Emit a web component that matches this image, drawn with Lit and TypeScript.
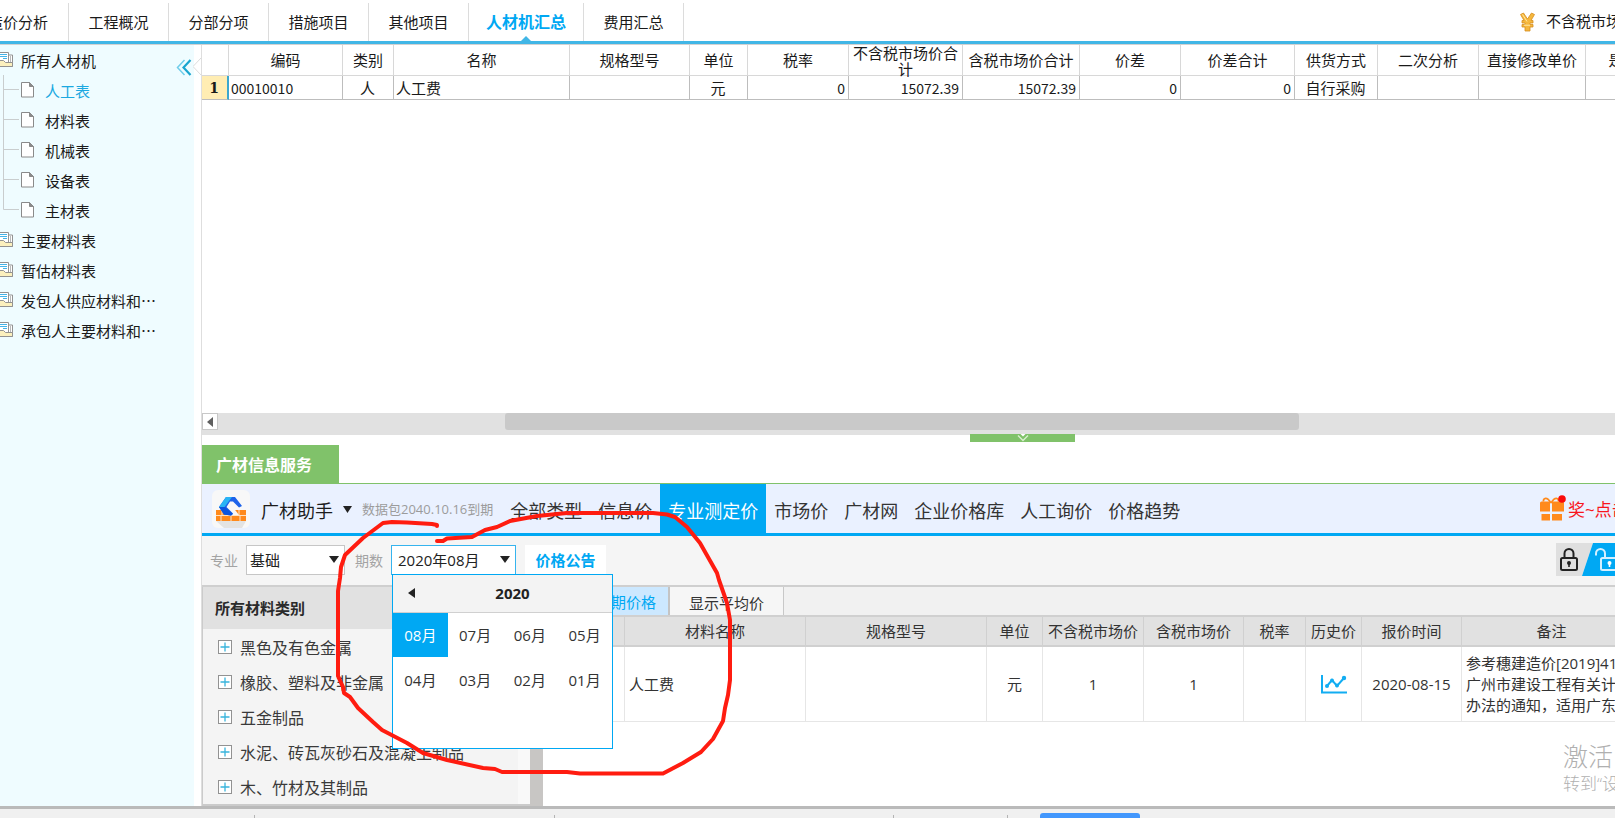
import { LitElement, html, css, svg } from "lit";
import { customElement, state } from "lit/decorators.js";
import { classMap } from "lit/directives/class-map.js";

const baseStyles = css`
  * { box-sizing: border-box; }
  button {
    margin: 0; padding: 0; border: 0; background: none; color: inherit;
    font: inherit; white-space: nowrap; cursor: pointer; text-align: left;
  }
  svg { display: block; flex: none; }
  table { border-collapse: separate; border-spacing: 0; table-layout: fixed; }
  th, td { font-weight: 400; padding: 0; overflow: hidden; }
`;

const folderIcon = svg`
  <path d="M-3 .5H8.500V3H12.500V14.500H-3z" fill="#fff" stroke="#929292"/>
  <path d="M8.500 1V10" stroke="#929292"/>
  <path d="M10.500 4V10" stroke="#b9b9b9"/>
  <path d="M0 2.500h7M0 4.500h7M3 6.500h4" stroke="#45b4e8"/>
  <path d="M-3 8.500H3.500L5.500 10.500H12.500V14.500H-3z" fill="#fbf0be" stroke="#929292"/>`;

@customElement("top-tabs")
class TopTabs extends LitElement {
  @state() active = "人材机汇总";
  tabs = ["造价分析", "工程概况", "分部分项", "措施项目", "其他项目", "人材机汇总", "费用汇总"];
  static styles = [baseStyles, css`
    :host { display: flex; flex: none; height: 45px; border-bottom: 1px solid #d2d2d2; background: #fff; }
    .line { display: flex; flex: 1; min-width: 0; height: 44px; border-bottom: 3px solid #41b6e6; justify-content: space-between; }
    .tabs { display: flex; margin-left: -32px; padding-top: 3px; }
    .tab {
      position: relative; width: 101px; text-align: center; padding-bottom: 2px;
      border-right: 1px solid #dcdcdc; font-size: 15px; color: #1a1a1a;
    }
    .tab + .tab { width: 100px; }
    .tab + .tab.active { width: 115px; font-size: 16px; font-weight: 700; color: #00a8f3; padding-bottom: 2px; }
    .mark {
      position: absolute; left: 52px; bottom: 0; width: 10px; height: 5px;
      background: #41b6e6; clip-path: polygon(50% 0, 100% 100%, 0 100%);
    }
    .total { display: flex; flex: 0 0 95px; gap: 11px; padding-top: 10px; line-height: 22px; white-space: nowrap; overflow: hidden; }
    .total svg { margin-top: 2px; }
  `];
  render() {
    return html`<div class="line">
      <nav class="tabs">
        ${this.tabs.map(t => html`<button class=${classMap({ tab: true, active: t === this.active })}
          @click=${() => (this.active = t)}>${t}${t === this.active ? html`<span class="mark"></span>` : ""}</button>`)}
      </nav>
      <div class="total">
        <svg width="15" height="20" viewBox="0 0 15 20">
          <path d="M.5 2.500l3-1.500 4 6 4-6 3 1.500-3.500 6h2v2.500h-3v1.500h3v2.500h-3v4h-5v-4h-3v-2.500h3v-1.500h-3v-2.500h2z"
            fill="#f5b73c" stroke="#d58e1f" stroke-width=".8"/>
          <path d="M2.500 2.500l4.500 7M4 13.200h6" stroke="#ffe9a8" stroke-width="1"/>
        </svg>
        <span>不含税市场价合计</span>
      </div>
    </div>`;
  }
}

@customElement("side-tree")
class SideTree extends LitElement {
  @state() active = "人工表";
  leaves = ["人工表", "材料表", "机械表", "设备表", "主材表"];
  others = ["主要材料表", "暂估材料表", "发包人供应材料和…", "承包人主要材料和…"];
  static styles = [baseStyles, css`
    :host { display: block; position: relative; flex: 0 0 194px; background: #effcff; }
    .row { display: flex; align-items: center; height: 30px; width: 100%; font-size: 15px; color: #1a1a1a; }
    .folder { gap: 8px; }
    .folder svg { align-self: flex-start; margin-top: 7px; }
    .leaf { gap: 11px; }
    .active { color: #1ba9e1; }
    .fold { position: absolute; top: 12px; right: 2px; }
    .notch { position: absolute; top: 12px; right: -7px; z-index: 1; }
  `];
  folder(t: string) {
    return html`<button class="row folder">
      <svg width="13" height="15" viewBox="0 0 13 15" fill="none">${folderIcon}</svg>${t}</button>`;
  }
  render() {
    const last = this.leaves.length - 1;
    return html`
      ${this.folder("所有人材机")}
      ${this.leaves.map((t, i) => html`
        <button class=${classMap({ row: true, leaf: true, active: t === this.active })} @click=${() => (this.active = t)}>
          <svg width="34" height="30" viewBox="0 0 34 30" fill="none">
            <path d=${i === last ? "M3.500 0V14.500H19" : "M3.500 0V30M3.500 14.500H19"} stroke="#c9cdce"/>
            <path d="M21.500 7.500h8l4 4v10.500h-12z" fill="#fff" stroke="#8a8a8a"/>
            <path d="M29.500 7.500v4h4z" fill="#8a8a8a" stroke="#8a8a8a"/>
          </svg>${t}</button>`)}
      ${this.others.map(t => this.folder(t))}
      <button class="fold" aria-label="收起">
        <svg width="16" height="20" viewBox="0 0 16 20" fill="none">
          <path d="M8.500 3L1.500 10.500l7 7.500" stroke="#6fcdea" stroke-width="1.500"/>
          <path d="M14.500 3L7.500 10.500l7 7.500" stroke="#1aa5cf" stroke-width="2.200"/>
        </svg>
      </button>
      <svg class="notch" width="8" height="20" viewBox="0 0 8 20">
        <path d="M8 1L0 9.500 8 18" fill="#fff" stroke="#dcdcdc"/>
      </svg>`;
  }
}

interface Col { title: string; width: number; value: string; align?: string }

@customElement("summary-grid")
class SummaryGrid extends LitElement {
  cols: Col[] = [
    { title: "编码", width: 114, value: "00010010", align: "left" },
    { title: "类别", width: 51, value: "人" },
    { title: "名称", width: 176, value: "人工费", align: "left" },
    { title: "规格型号", width: 120, value: "" },
    { title: "单位", width: 58, value: "元" },
    { title: "税率", width: 101, value: "0", align: "right" },
    { title: "不含税市场价合计", width: 114, value: "15072.39", align: "right" },
    { title: "含税市场价合计", width: 117, value: "15072.39", align: "right" },
    { title: "价差", width: 101, value: "0", align: "right" },
    { title: "价差合计", width: 114, value: "0", align: "right" },
    { title: "供货方式", width: 83, value: "自行采购" },
    { title: "二次分析", width: 101, value: "" },
    { title: "直接修改单价", width: 107, value: "" },
    { title: "是否暂估", width: 106, value: "" },
  ];
  static styles = [baseStyles, css`
    :host { display: flex; flex-direction: column; flex: 1; min-height: 0; min-width: 0; position: relative; }
    .view { flex: 1; overflow: hidden; min-height: 0; }
    table { width: 1490px; font-size: 15px; color: #1a1a1a; }
    th { height: 31px; line-height: 16px; border-right: 1px solid #d8d8d8; border-bottom: 1px solid #d8d8d8; text-align: center; overflow: visible; }
    th .cap { display: grid; place-items: center; height: 30px; }
    td { height: 24px; line-height: 22px; border-right: 1px solid #bdbdbd; border-bottom: 1px solid #bdbdbd; text-align: center; padding: 0 3px 0 2px; white-space: nowrap; }
    td.left { text-align: left; }
    td.right { text-align: right; }
    td.num { font-size: 14px; }
    .no { background: #ffedb3; border-right: 2px solid #3ba7cf; font: 700 14px/22px "DejaVu Serif", serif; }
    .idx { width: 27px; }
    .scroll { display: flex; flex: none; height: 22px; background: #e1e1e1; }
    .prev { width: 16px; height: 17px; background: #fff; border: 1px solid #c8c8c8; display: grid; place-items: center; }
    .track { flex: 1; padding-left: 287px; }
    .thumb { width: 72%; max-width: 794px; height: 17px; border-radius: 3px; background: #c9c9c9; }
    .handle { position: absolute; left: 768px; bottom: -7px; width: 105px; height: 8px; background: #80c26a; display: grid; place-items: start center; }
  `];
  render() {
    return html`
      <div class="view"><table>
        <colgroup><col class="idx">${this.cols.map(c => html`<col style="width:${c.width}px">`)}</colgroup>
        <thead><tr><th></th>${this.cols.map(c => html`<th scope="col"><div class="cap">${c.title}</div></th>`)}</tr></thead>
        <tbody><tr><td class="no">1</td>
          ${this.cols.map(c => html`<td class="${c.align ?? ""} ${/\d/.test(c.value) ? "num" : ""}">${c.value}</td>`)}</tr></tbody>
      </table></div>
      <div class="scroll">
        <button class="prev" aria-label="向左滚动"><svg width="6" height="10"><path d="M6 0v10L0 5z" fill="#5f5f5f"/></svg></button>
        <div class="track"><div class="thumb"></div></div>
      </div>
      <button class="handle" aria-label="折叠">
        <svg width="12" height="8" viewBox="0 0 12 8" fill="none"><path d="M3.500 0h5L6 2.500z" fill="#fff"/><path d="M1 1.500l5 5 5-5" stroke="#d8efcf" stroke-width="1.400"/></svg>
      </button>`;
  }
}

@customElement("month-popup")
class MonthPopup extends LitElement {
  @state() month = "08月";
  months = ["08月", "07月", "06月", "05月", "04月", "03月", "02月", "01月"];
  static styles = [baseStyles, css`
    :host {
      display: block; position: absolute; left: 1px; top: 29px; z-index: 5;
      width: 221px; height: 175px; background: #fff; border: 1px solid #00a8f3;
      font-size: 15px; color: #333;
    }
    .head { display: grid; grid-template-columns: 36px 1fr 16px; align-items: center; height: 38px; background: #f3f3f3; border-bottom: 1px solid #d0d0d0; }
    .prev { padding-left: 15px; }
    .year { text-align: center; font-weight: 700; line-height: 22px; color: #222; }
    .grid { display: grid; grid-template-columns: repeat(4, 1fr); row-gap: 1px; }
    .m { height: 44px; text-align: center; }
    .m.on { background: #00a8f3; color: #fff; }
  `];
  render() {
    return html`
      <div class="head">
        <button class="prev" aria-label="上一年"><svg width="7" height="10"><path d="M7 0v10L0 5z" fill="#222"/></svg></button>
        <span class="year">2020</span>
      </div>
      <div class="grid">${this.months.map(m => html`<button class=${classMap({ m: true, on: m === this.month })}
        @click=${() => (this.month = m)}>${m}</button>`)}</div>`;
  }
}

@customElement("price-table")
class PriceTable extends LitElement {
  static styles = [baseStyles, css`
    :host { display: block; flex: 1; min-width: 0; overflow: hidden; background: #fff; }
    .tabs { display: flex; height: 28px; background: #f1f1f1; }
    .tab { width: 114px; text-align: center; background: #f6f6f6; border-right: 1px solid #c8c8c8; color: #333; padding-top: 2px; }
    .tab.on { width: 127px; text-align: right; padding-right: 12px; padding-top: 0; background: #cce8ff; color: #00a8f3; border-right: 2px solid #c4c4c4; }
    table { width: 1099px; font-size: 15px; color: #333; }
    th { height: 32px; line-height: 28px; background: #e1e1e1; border: solid #d0d0d0; border-width: 2px 1px 2px 0; text-align: center; white-space: nowrap; }
    td { height: 75px; line-height: 21px; border-right: 1px solid #e6e6e6; border-bottom: 1px solid #e6e6e6; text-align: center; white-space: nowrap; }
    td.left { text-align: left; padding-left: 4px; }
    td svg { margin: auto; }
  `];
  cols: [string, number][] = [["", 82], ["材料名称", 181], ["规格型号", 181], ["单位", 56], ["不含税市场价", 101], ["含税市场价", 100],
    ["税率", 62], ["历史价", 56], ["报价时间", 100], ["备注", 180]];
  render() {
    return html`
      <div class="tabs"><button class="tab on">显示本期价格</button><button class="tab">显示平均价</button></div>
      <table>
        <colgroup>${this.cols.map(c => html`<col style="width:${c[1]}px">`)}</colgroup>
        <thead><tr>${this.cols.map(c => html`<th scope="col">${c[0]}</th>`)}</tr></thead>
        <tbody><tr>
          <td></td><td class="left">人工费</td><td></td><td>元</td><td>1</td><td>1</td><td></td>
          <td><svg width="26" height="20" viewBox="0 0 26 20" fill="none" stroke="#12adf2" stroke-width="2">
            <path d="M1 1v17.500h25"/><path d="M6 12l5-6 5 6 7-8"/>
            <g fill="#12adf2" stroke="none"><circle cx="6" cy="12" r="2"/><circle cx="11" cy="6.500" r="2"/><circle cx="16" cy="11.500" r="2"/><circle cx="23" cy="4" r="2.200"/></g>
          </svg></td>
          <td>2020-08-15</td>
          <td class="left">参考穗建造价[2019]41号<br>广州市建设工程有关计价<br>办法的通知，适用广东省</td>
        </tr></tbody>
      </table>`;
  }
}

@customElement("price-assistant")
class PriceAssistant extends LitElement {
  @state() active = "专业测定价";
  nav = ["全部类型", "信息价", "专业测定价", "市场价", "广材网", "企业价格库", "人工询价", "价格趋势"];
  cats = ["黑色及有色金属", "橡胶、塑料及非金属", "五金制品", "水泥、砖瓦灰砂石及混凝土制品", "木、竹材及其制品"];
  static styles = [baseStyles, css`
    :host { display: block; flex: none; font-size: 15px; padding-top: 10px; }
    .service { display: flex; height: 39px; border-bottom: 1px solid #80c26a; }
    .service button { width: 137px; padding-left: 14px; background: #80c26a; color: #fff; font-size: 16px; font-weight: 700; }
    .bar { display: flex; height: 52px; background: #eaf1ff; border-bottom: 3px solid #00a8f3; overflow: hidden; white-space: nowrap; }
    .logo { align-self: center; margin-left: 10px; }
    .brand { display: flex; align-items: center; gap: 10px; margin-left: 11px; padding-top: 2px; font-size: 18px; color: #1c1c1c; }
    .expire { align-self: center; margin: 0 9px 0 10px; font-size: 13px; color: #9c9c9c; }
    .nav { padding: 2px 8px 0; font-size: 18px; color: #333; }
    .nav.on { background: #00a8f3; color: #fff; }
    .gift { display: flex; align-items: center; flex: 0 0 76px; min-width: 0; gap: 2px; margin-left: auto; color: #f8161d; font-size: 17px; text-decoration: none; }
    .tools { display: flex; align-items: center; height: 51px; padding: 0 0 2px 8px; background: #f5f5f5; border-bottom: 2px solid #cfcfcf; }
    label { font-size: 14px; color: #a3a3a3; margin-right: 8px; }
    .pick { position: relative; margin-right: 10px; }
    .pick.period { margin-right: 9px; }
    select {
      display: block; appearance: none; width: 99px; height: 30px; padding: 0 0 0 3px; border: 1px solid #c6c6c6;
      border-radius: 0; background: #fff; font: inherit; color: #222; outline: 0;
    }
    .period select { width: 125px; padding-left: 6px; border-color: #36b4ee; }
    .caret { position: absolute; right: 6px; top: 11px; pointer-events: none; }
    .notice { width: 81px; height: 29px; text-align: center; background: #fff; color: #00a8f3; font-weight: 700; }
    .lock { margin-left: auto; }
    .body { display: flex; height: 219px; overflow: hidden; }
    .cats { display: flex; flex-direction: column; flex: 0 0 328px; border: solid #cbcbcb; border-width: 0 0 2px 1px; background: linear-gradient(to left, #f9f9f9 12px, #f4f4f4 12px); font-size: 16px; color: #3a3a3a; }
    .cats-title { flex: 0 0 41px; line-height: 42px; padding-left: 12px; background: #e1e1e1; font-size: 15px; font-weight: 700; color: #2a2a2a; }
    .cat { display: flex; align-items: center; gap: 8px; height: 35px; padding-left: 15px; flex: none; }
    .split { flex: 0 0 13px; background: #c8c6c4; }
  `];
  caret() {
    return html`<svg class="caret" width="10" height="7"><path d="M0 0h10L5 7z" fill="#222"/></svg>`;
  }
  render() {
    return html`
      <div class="service"><button>广材信息服务</button></div>
      <div class="bar">
        <svg class="logo" width="38" height="38" viewBox="0 0 38 38">
          <rect width="38" height="38" rx="6" fill="#f8f8f8"/>
          <path d="M4 31h30l-4 7H12z" fill="#e3e3e3"/>
          <path d="M4 20h30v11H4z" fill="#ff8a1c"/>
          <path d="M4 25.500h30M10 20v5.500M27 20v5.500M9 25.500v5.500M19 25.500v5.500M28 25.500v5.500" stroke="#ffe3c4"/>
          <path d="M11 16h9l7 9h-9z" fill="#f8f8f8"/>
          <path d="M7 17L14 7h9l7 9-3 1.500-6-6h-3L14.500 17l6.500 6.500-2 2-7-1z" fill="#1e63ea"/>
          <path d="M7 17L14 7h6L12.500 17z" fill="#29b4f4"/>
          <path d="M7 17h6l8 7-2 1.500-7-1z" fill="#0c55de"/>
        </svg>
        <button class="brand">广材助手<svg width="9" height="7"><path d="M0 0h9L4.500 7z" fill="#222"/></svg></button>
        <span class="expire">数据包2040.10.16到期</span>
        ${this.nav.map(n => html`<button class=${classMap({ nav: true, on: n === this.active })}
          @click=${() => (this.active = n)}>${n}</button>`)}
        <a class="gift" href="#">
          <svg width="27" height="27" viewBox="0 0 27 27" fill="none">
            <path d="M12 8C8 1 4 3 4.500 6.500M12 8c4-7 8-5 7.500-1.500" stroke="#ff8a1c" stroke-width="1.800"/>
            <path d="M1 8q0-1.500 1.500-1.500H11v10H1zM13 6.500h10.500Q25 6.500 25 8v8.500H13zM2.500 19H11v6.500H2.500zM13 19h10v6.500H13z" fill="#ff8a1c"/>
            <circle cx="23" cy="4" r="3.800" fill="#fa0a0a"/>
          </svg>
          <span>奖~点击领取</span>
        </a>
      </div>
      <div class="tools">
        <label for="major">专业</label>
        <div class="pick"><select id="major"><option>基础</option></select>${this.caret()}</div>
        <label for="period">期数</label>
        <div class="pick period"><select id="period"><option>2020年08月</option></select>${this.caret()}<month-popup></month-popup></div>
        <button class="notice">价格公告</button>
        <button class="lock" aria-label="锁定">
          <svg width="59" height="33" viewBox="0 0 59 33" fill="none">
            <path d="M0 0h37L26 33H0z" fill="#dfdfdf"/><path d="M37 0h22v33H26z" fill="#00a8f3"/>
            <rect x="5" y="15" width="16" height="12" rx="1.500" stroke="#222" stroke-width="2"/>
            <path d="M8.500 15v-4.500a4.500 4.500 0 0 1 9 0V15" stroke="#222" stroke-width="2"/>
            <circle cx="13" cy="20" r="2" fill="#222"/><path d="M13 20v4" stroke="#222" stroke-width="1.600"/>
            <rect x="45" y="15" width="17" height="12" rx="1.500" stroke="#d4f0ff" stroke-width="2"/>
            <path d="M40 12.500V10.500a4.500 4.500 0 0 1 9 0V15" stroke="#d4f0ff" stroke-width="2"/>
            <circle cx="53.500" cy="20" r="2" fill="#fff"/><path d="M53.500 20v4" stroke="#fff" stroke-width="1.600"/>
          </svg>
        </button>
      </div>
      <div class="body">
        <div class="cats">
          <div class="cats-title">所有材料类别</div>
          ${this.cats.map(c => html`<button class="cat">
            <svg width="14" height="14"><rect x=".5" y=".5" width="13" height="13" fill="#fff" stroke="#929292"/>
            <path d="M7 2.500v9M2.500 7h9" stroke="#38b4dc" stroke-width="1.300"/></svg>${c}</button>`)}
        </div>
        <div class="split"></div>
        <price-table></price-table>
      </div>`;
  }
}

@customElement("app-root")
class AppRoot extends LitElement {
  static styles = [baseStyles, css`
    :host {
      display: flex; flex-direction: column; position: relative; height: 100vh; overflow: hidden;
      background: #fff; color: #1a1a1a; font: 15px "Open Sans", "Noto Sans CJK SC", sans-serif;
    }
    top-tabs, side-tree, summary-grid { font-family: "Noto Sans CJK SC", sans-serif; }
    .main { display: flex; flex: 1; min-height: 0; }
    .work { display: flex; flex-direction: column; flex: 1; min-width: 0; margin-left: 7px; border-left: 1px solid #dedede; }
    .status { display: grid; grid-template-columns: 255px 300px 339px 114px 32px 100px; flex: none; height: 12px; padding-top: 4px; border-top: 3px solid #bababa; background: #f0f0f0; }
    .cell { border-right: 1px solid #b4b4b4; margin-top: 2px; }
    .go { background: #4297fd; border-radius: 3px 3px 0 0; }
    .activate { position: absolute; left: calc(100% - 52px); bottom: 22px; z-index: 7; white-space: nowrap; color: #b0b0b0; font-size: 17px; line-height: 24px; font-weight: 300; pointer-events: none; }
    .activate strong { display: block; font-size: 25px; line-height: 32px; font-weight: 300; }
    .ink { position: absolute; left: 0; top: 0; z-index: 8; pointer-events: none; }
  `];
  render() {
    return html`
      <top-tabs></top-tabs>
      <div class="main">
        <side-tree></side-tree>
        <div class="work"><summary-grid></summary-grid><price-assistant></price-assistant></div>
      </div>
      <div class="status"><i class="cell"></i><i class="cell"></i><i class="cell"></i><i class="cell"></i><i></i><button class="go" aria-label="状态"></button></div>
      <div class="activate"><strong>激活 Windows</strong>转到“设置”以激活 Windows。</div>
      <svg class="ink" width="760" height="800" viewBox="0 0 760 800" fill="none" stroke="#ff1c10" stroke-width="4" stroke-linecap="round" stroke-linejoin="round">
        <path d="M437 526L437 525 432 524 407 522.500 392 522 383 523 363 538 345 555 341 567 340 578 338 591V676L343 687 344 693 350 697 358 708 373 722 382 730 407 743 423 753 447 760 483 768 495 769 502 772H567L580 773.500H663L683 763 701 752 713 739 723 721 725 708 728 695 730 680V620L727 603 719 580 717 573 700 543 687 527 675 517 667 514.500 653 513H567L537 516 510 521 497 527 485 530 472 537 447 538.500 443 541H437"/>
      </svg>`;
  }
}
